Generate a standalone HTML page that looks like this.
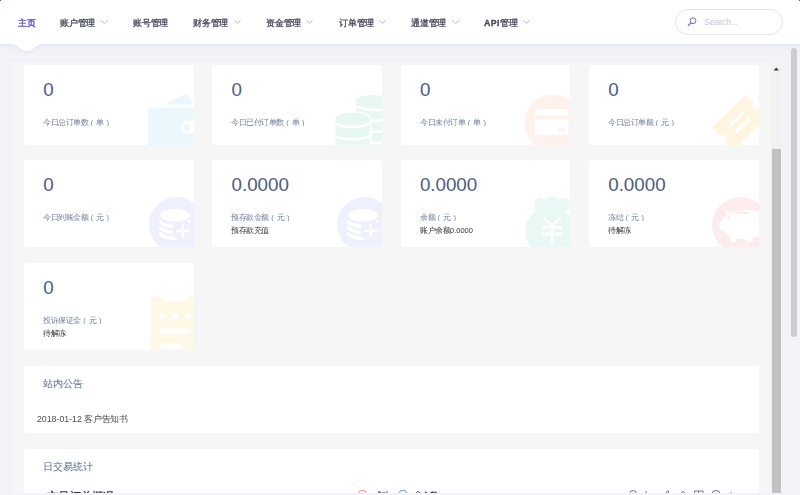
<!DOCTYPE html>
<html><head><meta charset="utf-8">
<style>
html,body{margin:0;padding:0;}
body{width:800px;height:495px;overflow:hidden;background:#f2f3f8;position:relative;font-family:"Liberation Sans",sans-serif;}
.abs{position:absolute;}
#nav{position:absolute;left:0;top:0;width:800px;height:44px;background:#fff;z-index:5;}
.ni{position:absolute;top:15.5px;-webkit-text-stroke:1.2px currentColor;font-size:35px;line-height:56px;transform:scale(.25);transform-origin:0 0;color:#45485e;white-space:nowrap;}
.ni.act{color:#5548cc;}
.chev{position:absolute;top:20px;width:7px;height:4px;}
#search{position:absolute;left:675px;top:9px;width:105.5px;height:23.5px;border:1px solid #e4e4f1;border-radius:13px;background:#fff;}
#frame{position:absolute;left:12px;top:63px;width:769px;height:429.5px;background:#f6f6f6;overflow:hidden;}
.card{position:absolute;background:#fff;border-radius:2px;overflow:hidden;}
.num{position:absolute;top:15.4px;left:19.2px;font-size:18.75px;line-height:20px;color:#4b5d7d;white-space:nowrap;}
.lbl{position:absolute;top:52px;left:19px;font-size:15px;word-spacing:1.5px;line-height:20px;transform:scale(.5);transform-origin:0 0;color:#6e7e9c;white-space:nowrap;}
.sub{position:absolute;top:65px;left:19px;font-size:15px;line-height:20px;transform:scale(.5);transform-origin:0 0;color:#333;white-space:nowrap;}
.ico{position:absolute;left:0;top:0;}
.ptitle{position:absolute;left:18.8px;top:12.5px;font-size:10px;line-height:12px;color:#5a6b8c;white-space:nowrap;}
</style></head><body>
<div class="abs" style="left:0;top:0;width:1px;height:1px;background:#6a5ad8;z-index:9"></div>
<div class="abs" style="left:799px;top:0;width:1px;height:1px;background:#6a5ad8;z-index:9"></div>
<div id="nav">
  <div class="ni act" style="left:17.5px">主页</div>
  <div class="ni" style="left:60px">账户管理</div>
  <svg class="chev" style="left:100.5px" viewBox="0 0 7 4"><path d="M0.5 0.5 L3.5 3.5 L6.5 0.5" fill="none" stroke="#b9bdd0" stroke-width="1"/></svg>
  <div class="ni" style="left:132.5px">账号管理</div>
  <div class="ni" style="left:193px">财务管理</div>
  <svg class="chev" style="left:233.5px" viewBox="0 0 7 4"><path d="M0.5 0.5 L3.5 3.5 L6.5 0.5" fill="none" stroke="#b9bdd0" stroke-width="1"/></svg>
  <div class="ni" style="left:265.5px">资金管理</div>
  <svg class="chev" style="left:306px" viewBox="0 0 7 4"><path d="M0.5 0.5 L3.5 3.5 L6.5 0.5" fill="none" stroke="#b9bdd0" stroke-width="1"/></svg>
  <div class="ni" style="left:338.5px">订单管理</div>
  <svg class="chev" style="left:379px" viewBox="0 0 7 4"><path d="M0.5 0.5 L3.5 3.5 L6.5 0.5" fill="none" stroke="#b9bdd0" stroke-width="1"/></svg>
  <div class="ni" style="left:411px">通道管理</div>
  <svg class="chev" style="left:451.5px" viewBox="0 0 7 4"><path d="M0.5 0.5 L3.5 3.5 L6.5 0.5" fill="none" stroke="#b9bdd0" stroke-width="1"/></svg>
  <div class="ni" style="left:484px"><span style="font-weight:bold;letter-spacing:1.6px">API</span>管理</div>
  <svg class="chev" style="left:523px" viewBox="0 0 7 4"><path d="M0.5 0.5 L3.5 3.5 L6.5 0.5" fill="none" stroke="#b9bdd0" stroke-width="1"/></svg>
  <div id="search">
    <svg class="abs" style="left:11px;top:7px" width="10" height="9" viewBox="0 0 10 9"><circle cx="6" cy="3.8" r="2.9" fill="none" stroke="#6d62d4" stroke-width="0.95"/><path d="M3.9 5.9 L1.2 8.5" stroke="#6d62d4" stroke-width="1.05" stroke-linecap="round"/></svg>
    <div class="abs" style="left:28px;top:7px;font-size:9px;line-height:11px;letter-spacing:-0.3px;color:#c6c9de;">Search...</div>
  </div>
</div>
<div class="abs" style="left:0;top:44px;width:800px;height:16px;overflow:hidden;z-index:6"><svg class="abs" style="left:0;top:-44px;filter:drop-shadow(0 1px 2.5px rgba(30,40,90,0.08))" width="800" height="60" viewBox="0 0 800 60"><path d="M-20 30 L-20 44 L9 44 C14.5 44 17 45.8 20.5 48.7 C24 51.6 29.4 51.6 33 48.7 C36.5 45.8 39 44 44.5 44 L820 44 L820 30 Z" fill="#fff"/></svg></div>
<div class="abs" style="left:791px;top:47.5px;width:6.3px;height:289px;border-radius:3.2px;background:#cdcdcd"></div>
<div id="frame">
<div class="card" style="left:12.00px;top:2.00px;width:169.55px;height:79.6px"><svg class="ico" width="169.55" height="95" viewBox="0 0 169.55 95"><g fill="#ebf6fd"><path d="M140.2 39.6 L157 30.8 Q160.5 29 163.5 30 Q166 31 167 34 L168.8 39.6 Z"/><rect x="124.2" y="42.7" width="60" height="50" rx="3"/></g><rect x="156.9" y="56.1" width="30" height="12.3" rx="6.15" fill="#fff"/><circle cx="162.9" cy="62.6" r="3" fill="#ebf6fd"/></svg><div class="num">0</div><div class="lbl">今日总订单数 ( 单 )</div></div>
<div class="card" style="left:200.35px;top:2.00px;width:169.55px;height:79.6px"><svg class="ico" width="169.55" height="95" viewBox="0 0 169.55 95"><rect x="143.85" y="36.2" width="35.0" height="58.8" fill="#e6f7f4"/><ellipse cx="161.35" cy="36.2" rx="17.5" ry="6.3" fill="#e6f7f4"/><path d="M141.85 38.5 A19.5 6.3 0 0 0 180.85 38.5" fill="none" stroke="#fff" stroke-width="2.4"/><path d="M141.85 49.5 A19.5 6.3 0 0 0 180.85 49.5" fill="none" stroke="#fff" stroke-width="2.4"/><path d="M141.85 60.5 A19.5 6.3 0 0 0 180.85 60.5" fill="none" stroke="#fff" stroke-width="2.4"/><path d="M141.85 71.5 A19.5 6.3 0 0 0 180.85 71.5" fill="none" stroke="#fff" stroke-width="2.4"/><path d="M141.85 82.5 A19.5 6.3 0 0 0 180.85 82.5" fill="none" stroke="#fff" stroke-width="2.4"/><ellipse cx="140.45000000000002" cy="53.900000000000006" rx="18.8" ry="8" fill="#fff"/><rect x="121.65000000000002" y="53.900000000000006" width="37.6" height="40" fill="#fff"/><rect x="123.45000000000002" y="53.900000000000006" width="34" height="41.099999999999994" fill="#e6f7f4"/><ellipse cx="140.45000000000002" cy="53.900000000000006" rx="17" ry="6.5" fill="#e6f7f4"/><path d="M121.45000000000002 55.599999999999994 A19 6.5 0 0 0 159.45000000000002 55.599999999999994" fill="none" stroke="#fff" stroke-width="2.4"/><path d="M121.45000000000002 68 A19 6.5 0 0 0 159.45000000000002 68" fill="none" stroke="#fff" stroke-width="2.4"/><path d="M121.45000000000002 80.4 A19 6.5 0 0 0 159.45000000000002 80.4" fill="none" stroke="#fff" stroke-width="2.4"/></svg><div class="num">0</div><div class="lbl">今日已付订单数 ( 单 )</div></div>
<div class="card" style="left:388.70px;top:2.00px;width:169.55px;height:79.6px"><svg class="ico" width="169.55" height="95" viewBox="0 0 169.55 95"><circle cx="151.3" cy="57.5" r="27.85" fill="#fff2ec"/><rect x="134" y="43.9" width="33.5" height="26.2" rx="2" fill="#fff"/><rect x="133" y="50.1" width="36" height="4.2" fill="#fff2ec"/><rect x="156.4" y="63.9" width="8.7" height="2.6" fill="#fff2ec"/></svg><div class="num">0</div><div class="lbl">今日未付订单 ( 单 )</div></div>
<div class="card" style="left:577.05px;top:2.00px;width:169.55px;height:79.6px"><svg class="ico" width="169.55" height="95" viewBox="0 0 169.55 95"><g transform="rotate(-45 150.6 57.2)"><rect x="126.85" y="41.45" width="47.5" height="31.5" rx="3" fill="#fff5e0"/><circle cx="126.85" cy="57.2" r="3.8" fill="#fff"/><circle cx="174.35" cy="57.2" r="3.8" fill="#fff"/><path d="M141.6 52.8 H159.6 M141.6 61.6 H159.6" stroke="#fff" stroke-width="3" stroke-linecap="round"/></g></svg><div class="num">0</div><div class="lbl">今日总订单额 ( 元 )</div></div>
<div class="card" style="left:12.00px;top:96.90px;width:169.55px;height:87.6px"><svg class="ico" width="169.55" height="95" viewBox="0 0 169.55 95"><circle cx="152.5" cy="64.6" r="27.5" fill="#eef0fd"/><ellipse cx="151" cy="55.2" rx="14.6" ry="6.4" fill="#fff"/><path d="M136.4 60.5 A14.6 6 0 0 0 165.6 60.5" fill="none" stroke="#fff" stroke-width="3"/><path d="M136.4 66.5 A14.6 6 0 0 0 165.6 66.5" fill="none" stroke="#fff" stroke-width="3"/><path d="M136.4 72.5 A14.6 6 0 0 0 165.6 72.5" fill="none" stroke="#fff" stroke-width="3"/><circle cx="158.75" cy="70.85" r="10.4" fill="#eef0fd"/><path d="M158.75 64.1 V77.6 M152 70.85 H165.5" stroke="#fff" stroke-width="2.25"/></svg><div class="num">0</div><div class="lbl">今日到账金额 ( 元 )</div></div>
<div class="card" style="left:200.35px;top:96.90px;width:169.55px;height:87.6px"><svg class="ico" width="169.55" height="95" viewBox="0 0 169.55 95"><circle cx="152.5" cy="64.6" r="27.5" fill="#eef0fd"/><ellipse cx="151" cy="55.2" rx="14.6" ry="6.4" fill="#fff"/><path d="M136.4 60.5 A14.6 6 0 0 0 165.6 60.5" fill="none" stroke="#fff" stroke-width="3"/><path d="M136.4 66.5 A14.6 6 0 0 0 165.6 66.5" fill="none" stroke="#fff" stroke-width="3"/><path d="M136.4 72.5 A14.6 6 0 0 0 165.6 72.5" fill="none" stroke="#fff" stroke-width="3"/><circle cx="158.75" cy="70.85" r="10.4" fill="#eef0fd"/><path d="M158.75 64.1 V77.6 M152 70.85 H165.5" stroke="#fff" stroke-width="2.25"/></svg><div class="num">0.0000</div><div class="lbl">预存款金额 ( 元 )</div><div class="sub">预存款充值</div></div>
<div class="card" style="left:388.70px;top:96.90px;width:169.55px;height:87.6px"><svg class="ico" width="169.55" height="95" viewBox="0 0 169.55 95"><g fill="#e9f7f5"><circle cx="140" cy="44.6" r="6.6"/><circle cx="151" cy="43.4" r="7.2"/><circle cx="162.5" cy="45" r="7"/><rect x="134" y="44" width="34" height="6.9" rx="2"/></g><g fill="#e9f7f5"><path d="M135.8 52.3 L165.3 52.3 L172.3 62 L125.3 62 Z"/><ellipse cx="148.8" cy="71.6" rx="24.5" ry="25"/></g><path d="M143.6 58.8 L151.1 65.2 L158.9 58.8 M151.1 65.2 V82.5 M142.3 67.3 H160 M142.3 74.2 H160" fill="none" stroke="#fff" stroke-width="2.8" stroke-linecap="round"/></svg><div class="num">0.0000</div><div class="lbl">余额 ( 元 )</div><div class="sub">账户余额0.0000</div></div>
<div class="card" style="left:577.05px;top:96.90px;width:169.55px;height:87.6px"><svg class="ico" width="169.55" height="95" viewBox="0 0 169.55 95"><circle cx="151.25" cy="65.2" r="28.1" fill="#fdecee"/><path d="M135.05 49.30 L142.45 52.60 Q148.95 49.70 158.95 49.70 Q170.95 49.70 176.95 58.10 L176.95 74.10 Q170.95 76.10 163.65 77.60 L163.65 81.80 L156.85 81.80 L156.85 78.90 L147.15 78.90 L147.15 81.80 L140.95 81.80 L140.95 76.60 Q135.45 73.60 133.45 70.60 L131.45 70.60 Q130.55 70.60 130.55 69.60 L130.55 61.90 Q130.55 60.90 131.45 60.90 L133.45 60.90 Q134.95 56.60 137.95 54.60 Z" fill="#fff"/><ellipse cx="139.45" cy="58" rx="1.3" ry="1.9" fill="#fdecee"/><path d="M146.4 52.7 Q152.8 52.3 159.2 53.6" stroke="#fdecee" stroke-width="2" fill="none" stroke-linecap="round"/></svg><div class="num">0.0000</div><div class="lbl">冻结 ( 元 )</div><div class="sub">待解冻</div></div>
<div class="card" style="left:12.00px;top:199.80px;width:169.55px;height:87.3px"><svg class="ico" width="169.55" height="95" viewBox="0 0 169.55 95"><path d="M126.5 36.5 Q126.5 33.5 129.5 33.5 L136.7 33.5 Q138.2 33.5 139 35 Q140.5 38.5 143 38.5 L159 38.5 Q161.6 38.5 163 35 Q163.6 33.5 165.4 33.5 L190 33.5 L190 100 L126.5 100 Z" fill="#fef8e7"/><g fill="#fff"><circle cx="138.2" cy="53.5" r="2.5"/><circle cx="151.3" cy="53.5" r="2.5"/><circle cx="164.1" cy="53.5" r="2.5"/></g><path d="M138.2 67.9 H164.1 M138.2 83 H154.8" stroke="#fff" stroke-width="5" stroke-linecap="round"/></svg><div class="num">0</div><div class="lbl">投诉保证金 ( 元 )</div><div class="sub">待解冻</div></div>
<div class="card" style="left:12px;top:302.8px;width:734.6px;height:66.9px"><div class="ptitle">站内公告</div><div class="abs" style="left:13.2px;top:48px;font-size:35px;line-height:40px;transform:scale(.25);transform-origin:0 0;color:#4c4c4c;white-space:nowrap">2018-01-12 客户告知书</div></div>
<div class="card" style="left:12px;top:385.6px;width:734.6px;height:80px"><div class="ptitle">日交易统计</div><div class="abs" style="left:22.5px;top:41px;font-size:45px;line-height:52px;transform:scale(.25);transform-origin:0 0;font-weight:bold;color:#333;white-space:nowrap">交易订单概况</div><svg class="abs" style="left:0;top:0" width="734" height="80" viewBox="0 0 734 80"><circle cx="338.25" cy="45.2" r="3.9" fill="none" stroke="#f49a9a" stroke-width="1.1"/><circle cx="379" cy="45.2" r="3.9" fill="none" stroke="#7d9ff0" stroke-width="1.1"/><path d="M391 45 L394 42.3 L397 45" fill="none" stroke="#444" stroke-width="0.9"/><g fill="none" stroke="#666" stroke-width="0.9"><path d="M605.5 45 A3.5 3.5 0 0 1 612.5 45"/><path d="M622 42 V45"/><path d="M641 45 L644 41.5 L645 45"/><path d="M656 45 L659 42.5 L662 45"/><path d="M670.5 42 H679 M670.5 42 V45 M674.5 42 V45 M679 42 V45"/><path d="M688 45 A4 3.5 0 0 1 696 45"/><path d="M707 43 V45"/></g></svg><div class="abs" style="left:350px;top:41px;font-size:30px;line-height:40px;transform:scale(.25);transform-origin:0 0;font-weight:bold;color:#333;white-space:nowrap">成功</div><div class="abs" style="left:398px;top:41px;font-size:30px;line-height:40px;transform:scale(.25);transform-origin:0 0;font-weight:bold;color:#333;white-space:nowrap">金额</div></div>
<div class="abs" style="left:759px;top:0;width:10.5px;height:429.5px;background:#f1f1f1"></div>
<svg class="abs" style="left:759px;top:0" width="10.5" height="12" viewBox="0 0 10.5 12"><path d="M2.6 7.4 L5.25 4.6 L7.9 7.4 Z" fill="#383838"/></svg>
<div class="abs" style="left:760px;top:86px;width:8.7px;height:343.5px;background:#c1c1c1"></div>
</div>
</body></html>
